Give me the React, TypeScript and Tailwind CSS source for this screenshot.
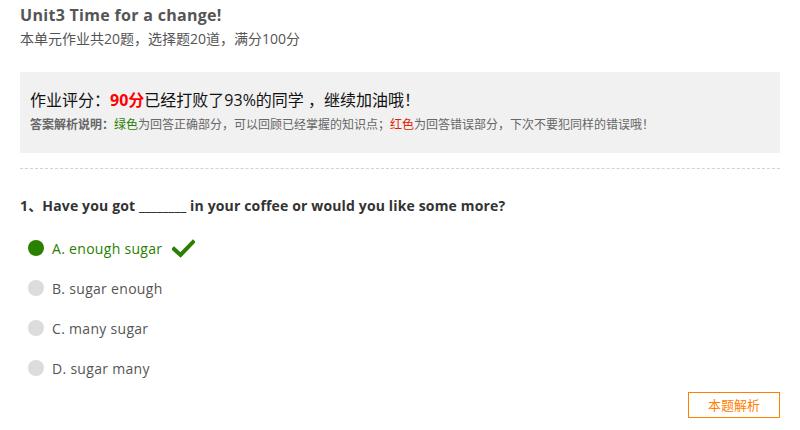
import React from 'react';

const options = [
  { key: 'A', text: 'enough sugar', correct: true },
  { key: 'B', text: 'sugar enough', correct: false },
  { key: 'C', text: 'many sugar', correct: false },
  { key: 'D', text: 'sugar many', correct: false },
];

function Check() {
  return (
    <svg width="23" height="19" viewBox="0 0 23 19" className="ml-[10px]">
      <path d="M2 10 L8.5 16 L21 3" fill="none" stroke="#2a8000" strokeWidth="4" strokeLinecap="square" />
    </svg>
  );
}

export default function App() {
  return (
    <div
      className="w-[800px] h-[430px] bg-white px-5 overflow-hidden"
      style={{ fontFamily: '"Open Sans", "Noto Sans CJK SC", sans-serif' }}
    >
      <h1 className="pt-[4px] text-[16px] leading-[22px] font-bold tracking-[0.3px] text-[#555]">Unit3 Time for a change!</h1>
      <p className="mt-[4px] text-[14px] leading-[18px] text-[#555]">本单元作业共20题，选择题20道，满分100分</p>

      <div className="mt-[24px] h-[81px] bg-[#f1f1f1] px-[10px] pt-[17px]">
        <div className="text-[16px] leading-[22px] text-[#111]">
          作业评分：<span className="font-bold text-[#ff0000]">90分</span>已经打败了93%的同学 ，继续加油哦！
        </div>
        <div className="mt-[6px] text-[12px] leading-[16px] text-[#666]">
          <span className="font-bold">答案解析说明：</span>
          <span className="text-[#2a8000]">绿色</span>为回答正确部分，可以回顾已经掌握的知识点；
          <span className="text-[#e02000]">红色</span>为回答错误部分，下次不要犯同样的错误哦！
        </div>
      </div>

      <div className="mt-[15px] border-t border-dashed border-[#d6d3c4]" />

      <div className="mt-[27px] text-[14px] leading-[20px] font-bold tracking-[0.15px] text-[#333]">
        1、Have you got ________ in your coffee or would you like some more?
      </div>

      <div className="mt-[12px] flex flex-col">
        {options.map((o) => (
          <div key={o.key} className="h-[40px] flex items-center pl-[8px]">
            <span
              className={`w-[16px] h-[16px] rounded-full ${o.correct ? 'bg-[#2a8000]' : 'bg-[#dcdcdc]'}`}
            />
            <span className={`ml-[8px] text-[14px] tracking-[0.3px] ${o.correct ? 'text-[#2a8000]' : 'text-[#555]'}`}>
              {o.key}. {o.text}
            </span>
            {o.correct && <Check />}
          </div>
        ))}
      </div>

      <div className="mt-[4px] flex justify-end">
        <button className="w-[92px] h-[26px] border border-[#ff8000] text-[#ff8000] text-[13px] leading-[24px] bg-white">
          本题解析
        </button>
      </div>
    </div>
  );
}
